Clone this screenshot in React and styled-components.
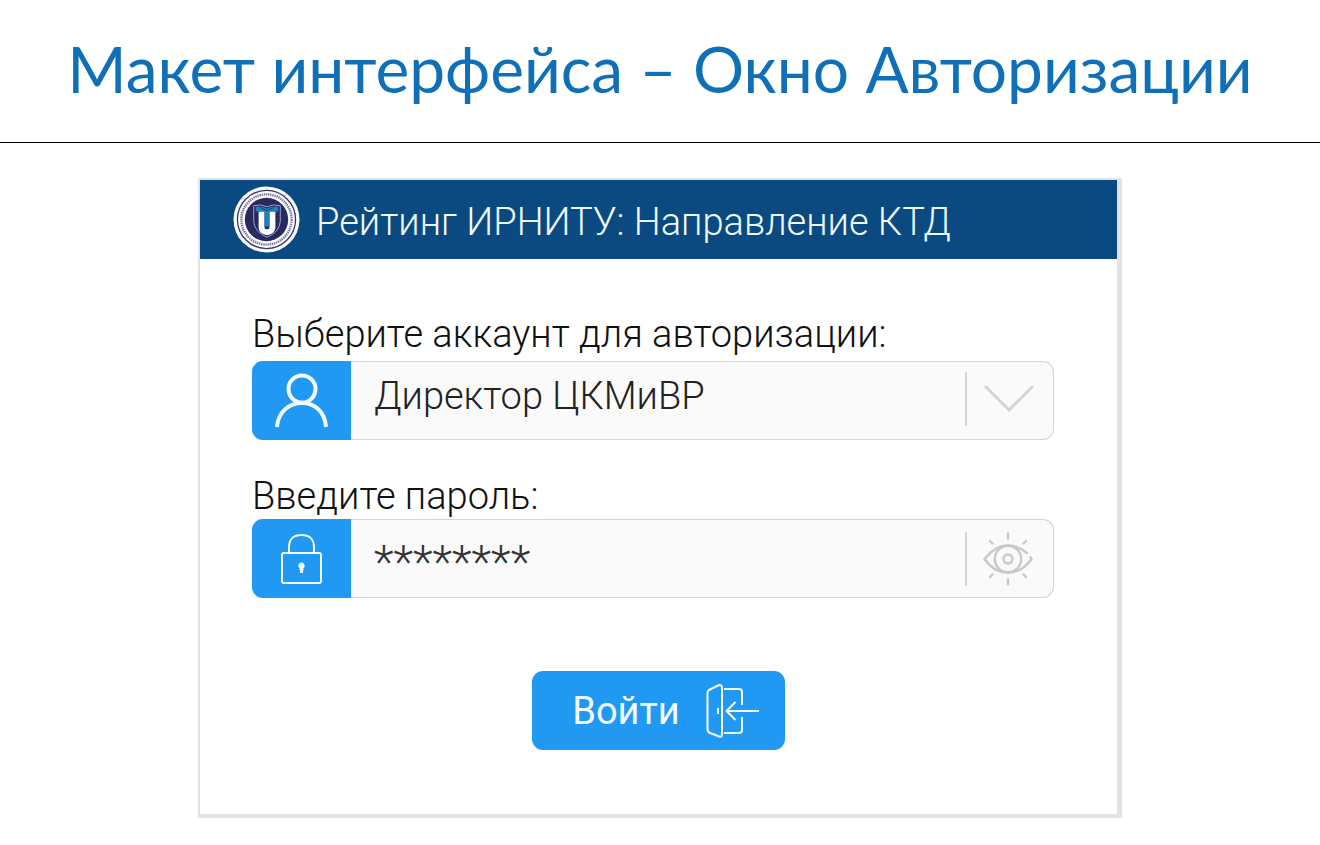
import React, { useState } from "react";
import styled, { createGlobalStyle } from "styled-components";

const GlobalStyle = createGlobalStyle`
  *, *::before, *::after { box-sizing: border-box; }
  body { margin: 0; background: #fff; font-family: Roboto, "Noto Sans", sans-serif; }
`;

const PageHeader = styled.header`
  padding: 29px 16px 33px;
  border-bottom: 1px solid #000;
`;

const PageTitle = styled.h1`
  margin: 0;
  color: #0f70b8;
  font-family: Lato, "Open Sans", sans-serif;
  font-size: 64px;
  font-weight: 400;
  line-height: 80px;
  text-align: center;
`;

const Card = styled.main`
  width: 70%;
  margin: 35px auto 26px;
  border: solid #e2e3e5;
  border-width: 2px 5px 4px 2px;
  background: #fff;
`;

const CardHeader = styled.div`
  display: flex;
  align-items: center;
  gap: 16px;
  padding: 6px 33px;
  background: #0a4a80;
`;

const Logo = styled.svg`
  flex: none;
  width: 67px;
  height: 67px;
`;

const CardTitle = styled.h2`
  margin: 0;
  padding-top: 4px;
  color: #eefaff;
  font-size: 38px;
  font-weight: 300;
  line-height: 44px;
`;

const Form = styled.form`
  display: flex;
  flex-direction: column;
  padding: 52px 63px 64px 52px;
`;

const Field = styled.div`
  display: flex;
  flex-direction: column;
  gap: ${(p) => p.$gap}px;
  margin-bottom: ${(p) => p.$after}px;
`;

const Label = styled.label`
  color: #111;
  font-size: 38px;
  font-weight: 300;
  line-height: 46px;
`;

const Control = styled.div`
  display: flex;
  align-items: stretch;
  height: 79px;
  border-radius: 11px;
  background: #fafafa;
  position: relative;
  overflow: hidden;
  box-shadow: inset 0 0 0 1px #d4d4d4;
`;

const IconTile = styled.span`
  display: flex;
  flex: none;
  align-items: center;
  justify-content: center;
  width: 99px;
  background: #2199f2;
  color: #f2fcff;
`;

const Account = styled.select`
  flex: 1;
  min-width: 0;
  padding: 0 88px 10px 23px;
  border: 0;
  appearance: none;
  background: transparent;
  color: #222;
  font: 300 38px Roboto, "Noto Sans", sans-serif;
`;

const Password = styled.input`
  flex: 1;
  min-width: 0;
  padding: 6px 0 0 23px;
  border: 0;
  background: transparent;
  color: #333;
  font: 300 46px Roboto, "Noto Sans", sans-serif;
`;

const Chevron = styled.span`
  position: absolute;
  top: 11px;
  right: 0;
  display: flex;
  align-items: center;
  justify-content: center;
  width: 89px;
  height: 54px;
  padding-right: 3px;
  border-left: 2px solid #d4d4d4;
  color: #d4d4d4;
  pointer-events: none;
`;

const Reveal = styled.button`
  display: flex;
  flex: none;
  align-items: center;
  justify-content: center;
  align-self: center;
  width: 89px;
  height: 54px;
  padding: 0 6px 0 0;
  border: 0;
  border-left: 2px solid #d4d4d4;
  background: transparent;
  color: #c9c9c9;
`;

const Submit = styled.button`
  display: flex;
  align-items: center;
  align-self: center;
  gap: 26px;
  height: 79px;
  margin-left: 11px;
  padding: 0 25px 0 40px;
  border: 0;
  border-radius: 11px;
  background: #2199f2;
  color: #f2fcff;
  font: 400 38px Roboto, "Noto Sans", sans-serif;
`;

function UniversityLogo() {
  return (
    <Logo viewBox="0 0 68 68" fill="none" aria-hidden="true">
      <circle cx="34" cy="34" r="33.5" fill="#fbfcff" />
      <circle cx="34" cy="34" r="29.5" stroke="#373364" strokeWidth="1.3" />
      <circle cx="34" cy="34" r="25.5" stroke="#77779a" strokeWidth="2.4" strokeDasharray="1.4 .8" />
      <circle cx="34" cy="34" r="22" fill="#29285f" />
      <path d="M21 20Q28 18 34.500 21Q41 18 48 20V36Q47 47 34.500 52Q22 47 21 36Z" stroke="#8fa6d4" strokeWidth="1" />
      <path d="M26 26H32V42Q32 44 34.500 44Q37 44 37 42V26H43V43Q42 49 34.500 50Q27 49 26 43Z" fill="#fff" />
      <path d="M23 21Q30 20 34.500 23Q39 20 46 21V26H37V41H32V26H23Z" fill="#1c83ba" />
      <path d="M28 22L34.500 25L41 22" stroke="#133f78" />
    </Logo>
  );
}

function UserIcon() {
  return (
    <svg width="56" height="58" viewBox="0 0 56 58" fill="none" stroke="currentColor" strokeWidth="4" aria-hidden="true">
      <circle cx="28" cy="17" r="13.5" />
      <path d="M3 55C4 40 15 31 28 31C41 31 51 40 52 55" />
    </svg>
  );
}

function LockIcon() {
  return (
    <svg width="42" height="52" viewBox="0 0 42 52" fill="none" stroke="currentColor" strokeWidth="2" aria-hidden="true">
      <rect x="1" y="20" width="39" height="30" rx="2" />
      <path d="M8 20V14C8 6 13 2 20.500 2C28 2 33 6 33 14V20" />
      <path d="M20.500 29.500A3.200 3.200 0 0 0 18.500 35.200L19 40H22L22.500 35.200A3.200 3.200 0 0 0 20.500 29.500Z" fill="currentColor" stroke="none" />
    </svg>
  );
}

function ChevronIcon() {
  return (
    <svg width="50" height="28" viewBox="0 0 50 28" fill="none" stroke="currentColor" strokeWidth="3" strokeLinecap="round" aria-hidden="true">
      <path d="M2 2L25 25L48 2" />
    </svg>
  );
}

function EyeIcon() {
  return (
    <svg width="50" height="54" viewBox="0 0 50 54" fill="none" stroke="currentColor" strokeWidth="2.400" strokeLinecap="round" aria-hidden="true">
      <path d="M44 21C37 15 32 13.500 25 13.500C15 13.500 7 20 1.500 27C7 35 15 40.500 25 40.500C35 40.500 43 35 48.500 27L47.500 25" />
      <circle cx="25" cy="27" r="13.200" />
      <circle cx="25" cy="27" r="4.500" />
      <path d="M25 1.500V6.500M25 47.500V52.500M7 9L9.500 11.500M43 9L40.500 11.500M7 45L9.500 42.500M43 45L40.500 42.500" />
    </svg>
  );
}

function EnterIcon() {
  return (
    <svg width="54" height="54" viewBox="0 0 54 54" fill="none" stroke="currentColor" strokeWidth="2" strokeLinejoin="round" aria-hidden="true">
      <path d="M3 6L12 1.500Q16 0 16 4V50Q16 54 12 52L4 49Q1.500 48 1.500 45V9Q1.500 7 3 6Z" />
      <path d="M18 5H33Q36 5 36 8V21M36 33V46Q36 49 33 49H18M12 24V30" />
      <path d="M53 27H21M29.500 18L20.500 27L29.500 36" />
    </svg>
  );
}

export default function App() {
  const [password, setPassword] = useState("********");

  return (
    <>
      <GlobalStyle />
      <PageHeader>
        <PageTitle>Макет интерфейса – Окно Авторизации</PageTitle>
      </PageHeader>
      <Card>
        <CardHeader>
          <UniversityLogo />
          <CardTitle>Рейтинг ИРНИТУ: Направление КТД</CardTitle>
        </CardHeader>
        <Form onSubmit={(e) => e.preventDefault()}>
          <Field $gap={4} $after={33}>
            <Label htmlFor="account">Выберите аккаунт для авторизации:</Label>
            <Control>
              <IconTile><UserIcon /></IconTile>
              <Account id="account">
                <option>Директор ЦКМиВР</option>
              </Account>
              <Chevron><ChevronIcon /></Chevron>
            </Control>
          </Field>
          <Field $gap={0} $after={73}>
            <Label htmlFor="password">Введите пароль:</Label>
            <Control>
              <IconTile><LockIcon /></IconTile>
              <Password id="password" autoComplete="off" value={password} onChange={(e) => setPassword(e.target.value)} />
              <Reveal type="button" aria-label="Показать пароль"><EyeIcon /></Reveal>
            </Control>
          </Field>
          <Submit type="submit">
            Войти
            <EnterIcon />
          </Submit>
        </Form>
      </Card>
    </>
  );
}
